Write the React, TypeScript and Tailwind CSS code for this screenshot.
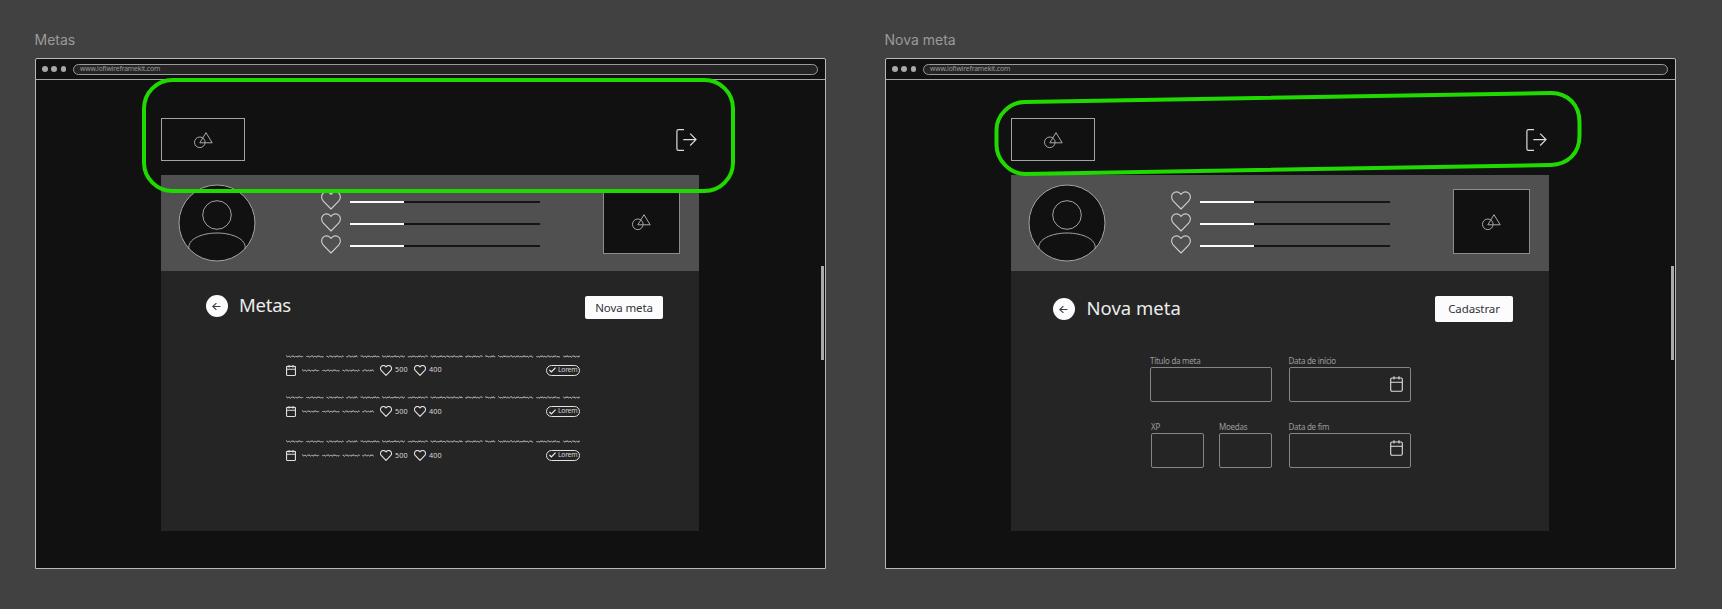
import React from "react";

type Span = [number, number];

const LINE: Span[] = [
  [0, 17.5], [20.5, 37.5], [40.5, 57.5], [60.5, 71.5], [74.5, 93.5], [96, 119], [122, 141.5],
  [144.5, 176.5], [179.5, 196.5], [199, 209], [212, 247.5], [250.5, 273.5], [277, 293.5],
];
const SHORT: Span[] = [[0, 17.5], [20.5, 37.5], [40.5, 57.5], [60.5, 72]];

function scribble([from, to]: Span, seed: number) {
  let d = `M${from} 2.2`;
  let i = seed;
  for (let x = from; x < to - 0.6; x += 1.3, i++) {
    const end = Math.min(x + 1.3, to);
    d += ` L${(x + end) / 2} ${[1.7, 3.1, 2, 3.3, 1.8][i % 5]} L${end} ${[2.7, 2.3, 2.9][i % 3]}`;
  }
  return d;
}

function Scribble({ spans, width }: { spans: Span[]; width: number }) {
  return (
    <svg width={width} height="5" viewBox={`0 0 ${width} 5`} fill="none" stroke="#c4c4c4" strokeWidth="0.9" className="block shrink-0">
      {spans.map((s, i) => <path key={i} d={scribble(s, i)} />)}
    </svg>
  );
}

function Shapes() {
  return (
    <svg width="20" height="18" viewBox="0 0 20 18" fill="none" stroke="#a8a8a8" strokeWidth="1" className="block">
      <circle cx="6.8" cy="11.3" r="5.3" />
      <path d="M13 1.7 L19.2 11.8 H6.8 Z" />
    </svg>
  );
}

function Heart({ className, color, weight }: { className: string; color: string; weight: number }) {
  return (
    <svg viewBox="0 0 20 19" className={className} fill="none" stroke={color} strokeWidth={weight} strokeLinejoin="round">
      <path d="M10 18 L2.1 9.8 C0.2 7.8 0.1 4.4 2 2.4 C4 0.3 7.2 0.4 9 2.3 L10 3.4 L11 2.3 C12.8 0.4 16 0.3 18 2.4 C19.9 4.4 19.8 7.8 17.9 9.8 Z" />
    </svg>
  );
}

function Calendar({ className, weight }: { className: string; weight: number }) {
  return (
    <svg viewBox="0 0 13 16" preserveAspectRatio="none" className={className} fill="none" stroke="#dedede" strokeWidth={weight}>
      <rect x="0.7" y="2" width="11.6" height="13.3" rx="1.2" />
      <path d="M0.7 6.3 H12.3 M4 0.2 V3.5 M9 0.2 V3.5" />
    </svg>
  );
}

function Logout() {
  return (
    <svg width="21" height="22" viewBox="0 0 21 22" fill="none" stroke="#dcdcdc" strokeWidth="1.2" className="block">
      <path d="M8 0.7 H2.5 Q0.9 0.7 0.9 2.3 V19.7 Q0.9 21.3 2.5 21.3 H8" />
      <path d="M7.3 10.6 H20 M14.2 4.7 L20 10.6 L14.2 16.5" />
    </svg>
  );
}

function Avatar() {
  return (
    <svg width="78" height="78" viewBox="0 0 78 78" fill="none" stroke="#a3a3a3" strokeWidth="1" className="block">
      <circle cx="39" cy="39" r="38" fill="#111111" />
      <circle cx="39" cy="31" r="14.3" />
      <path d="M11 65 C9 55 24 49 39 49 C54 49 69 55 67 65" />
    </svg>
  );
}

function BackButton() {
  return (
    <div className="flex h-[22px] w-[22px] shrink-0 items-center justify-center rounded-full bg-[#fcfcff]">
      <svg width="9" height="9" viewBox="0 0 9 9" fill="none" stroke="#3c3c3c" strokeWidth="1.1">
        <path d="M8.4 4.5 H1 M4.4 1.1 L0.8 4.5 L4.4 7.9" />
      </svg>
    </div>
  );
}

function Frame({ name, children }: { name: string; children: React.ReactNode }) {
  return (
    <section className="w-[791px] shrink-0">
      <h2 className="-mt-[1px] ml-[-0.5px] h-[27px] font-['Inter',sans-serif] text-[14px] leading-[17px] text-[#9a9a9a]">{name}</h2>
      <div className="flex h-[511px] flex-col rounded-t-[2px] border border-[#b9b9b9] bg-[#111111]">
        <div className="flex h-[21px] shrink-0 items-center border-b border-[#a5a5a5] pl-[6px] pr-[7px]">
          <div className="flex w-[31px] shrink-0 gap-[3.5px]">
            <i className="size-[5.8px] rounded-full bg-[#a9a9a9]" />
            <i className="size-[5.8px] rounded-full bg-[#a9a9a9]" />
            <i className="size-[5.8px] rounded-full bg-[#a9a9a9]" />
          </div>
          <div className="flex h-[11px] flex-1 items-center rounded-full border border-[#999999] bg-[#252525] pl-[6px] text-[6.8px] leading-none text-[#9c9c9c]">
            <span className="tracking-[-0.14px]">www.lofiwireframekit.com</span>
          </div>
        </div>
        <div className="flex flex-1">
          <div className="ml-[125px] w-[538px]">
            <header className="flex h-[95px] items-start justify-between pr-[2px]">
              <div className="mt-[38px] flex h-[43px] w-[84px] items-center justify-center border border-[#a3a3a3]">
                <Shapes />
              </div>
              <div className="mt-[49px]"><Logout /></div>
            </header>
            <div className="flex h-[96px] items-start bg-[#505050]">
              <div className="ml-[17px] mt-[9px]"><Avatar /></div>
              <div className="ml-[65px] mt-[16.3px] flex flex-col gap-[3px]">
                {[0, 1, 2].map((i) => (
                  <div key={i} className="flex h-[19px] items-center gap-[9px]">
                    <Heart className="h-[19px] w-[20px]" color="#d0d0d0" weight={1.1} />
                    <div className="mt-[1.5px] flex h-[2px] w-[190px] bg-[#151515]">
                      <div className="w-[54px] bg-[#fafaff]" />
                    </div>
                  </div>
                ))}
              </div>
              <div className="ml-[63px] mt-[14px] flex h-[65px] w-[77px] items-center justify-center border border-[#8c8c8c] bg-[#111111]">
                <div className="-ml-[1px]"><Shapes /></div>
              </div>
            </div>
            <main className="h-[260px] bg-[#252525]">{children}</main>
          </div>
          <div className="ml-[122px] mt-[186px] h-[94px] w-[3px] bg-[#aaaaaa]" />
        </div>
      </div>
    </section>
  );
}

function Goal({ className }: { className: string }) {
  return (
    <li className={className}>
      <Scribble spans={LINE} width={295} />
      <div className="mt-[6px] flex h-[11px] items-center text-[7.2px] leading-none text-[#d6d6d6]">
        <Calendar className="ml-[0.5px] h-[11px] w-[10px]" weight={1.5} />
        <div className="ml-[6px] w-[77.5px]"><Scribble spans={SHORT} width={73} /></div>
        <Heart className="h-[11px] w-[12px]" color="#dedede" weight={2} />
        <span className="ml-[3.5px] w-[18.5px] tracking-[0.2px]">500</span>
        <Heart className="h-[11px] w-[12px]" color="#dedede" weight={2} />
        <span className="ml-[3.5px] tracking-[0.2px]">400</span>
        <div className="ml-auto mr-[0.5px] flex h-[11px] w-[34.5px] items-center rounded-full border border-[#e2e2e2] pl-[2.5px]">
          <svg width="7" height="6" viewBox="0 0 7 6" fill="none" stroke="#eeeeee" strokeWidth="1.2" className="shrink-0">
            <path d="M0.4 3 L2.4 5 L6.6 0.6" />
          </svg>
          <span className="ml-[2px] text-[6.8px] tracking-[-0.25px]">Lorem</span>
        </div>
      </div>
    </li>
  );
}

function Field({ label, className, date }: { label: string; className: string; date?: string }) {
  return (
    <label className={className}>
      <span className="block h-[11px] whitespace-nowrap text-[8px] leading-[10px] tracking-[-0.27px] text-[#9b9b9b]">{label}</span>
      <span className="flex h-[35px] w-full justify-end rounded-[2px] border border-[#858585] pr-[7px]">
        {date && <Calendar className={date} weight={1.1} />}
      </span>
    </label>
  );
}

export default function App() {
  return (
    <div className="relative flex h-[609px] w-[1722px] gap-[59px] overflow-hidden bg-[#414141] pl-[35px] pt-[32px] font-['Noto_Sans',sans-serif]">
      <Frame name="Metas">
        <div className="flex h-[48px] items-start pl-[44.5px] pr-[36px] pt-[22px]">
          <div className="mt-[2px]"><BackButton /></div>
          <h1 className="ml-[11.5px] text-[18.5px] leading-[24px] tracking-[-0.25px] text-[#ececec]">Metas</h1>
          <button className="ml-auto mt-[3px] h-[23px] w-[78px] shrink-0 rounded-[2px] bg-[#fcfcff] text-[11.5px] leading-none tracking-[-0.1px] text-[#333333]">Nova meta</button>
        </div>
        <ul className="ml-[124.5px] mt-[34.6px] w-[295px]">
          <Goal className="h-[41.5px]" />
          <Goal className="h-[43.9px]" />
          <Goal className="h-[22px]" />
        </ul>
      </Frame>
      <Frame name="Nova meta">
        <div className="flex h-[51px] items-start pl-[41.5px] pr-[36px] pt-[25px]">
          <div className="mt-[2px]"><BackButton /></div>
          <h1 className="ml-[12px] text-[18.5px] leading-[24px] text-[#ececec]">Nova meta</h1>
          <button className="ml-auto h-[26px] w-[78px] shrink-0 rounded-[2px] bg-[#fcfcff] text-[11.5px] leading-none tracking-[-0.12px] text-[#333333]">Cadastrar</button>
        </div>
        <div className="ml-[139px] mt-[33.5px] flex">
          <Field label="Título da meta" className="mr-[16.5px] w-[122px]" />
          <Field label="Data de início" className="w-[122px]" date="mt-[8.5px] h-[16px] w-[13px]" />
        </div>
        <div className="ml-[140px] mt-[20px] flex">
          <Field label="XP" className="mr-[15px] w-[53px]" />
          <Field label="Moedas" className="mr-[16.5px] w-[53px]" />
          <Field label="Data de fim" className="w-[122px]" date="mt-[6px] h-[16px] w-[13px]" />
        </div>
      </Frame>
      <svg width="1722" height="609" viewBox="0 0 1722 609" fill="none" stroke="#20d900" strokeWidth="4" className="pointer-events-none absolute inset-0">
        <rect x="144" y="80" width="589" height="111" rx="28.5" />
        <path d="M1025 102 L1551 93 C1568 93 1579.5 105 1579.5 122 V136 C1579.5 153 1568 164.5 1551 165 L1025 174 C1010 174 996.5 160 996.5 145 V130 C996.5 115 1010 102 1025 102 Z" />
      </svg>
    </div>
  );
}
